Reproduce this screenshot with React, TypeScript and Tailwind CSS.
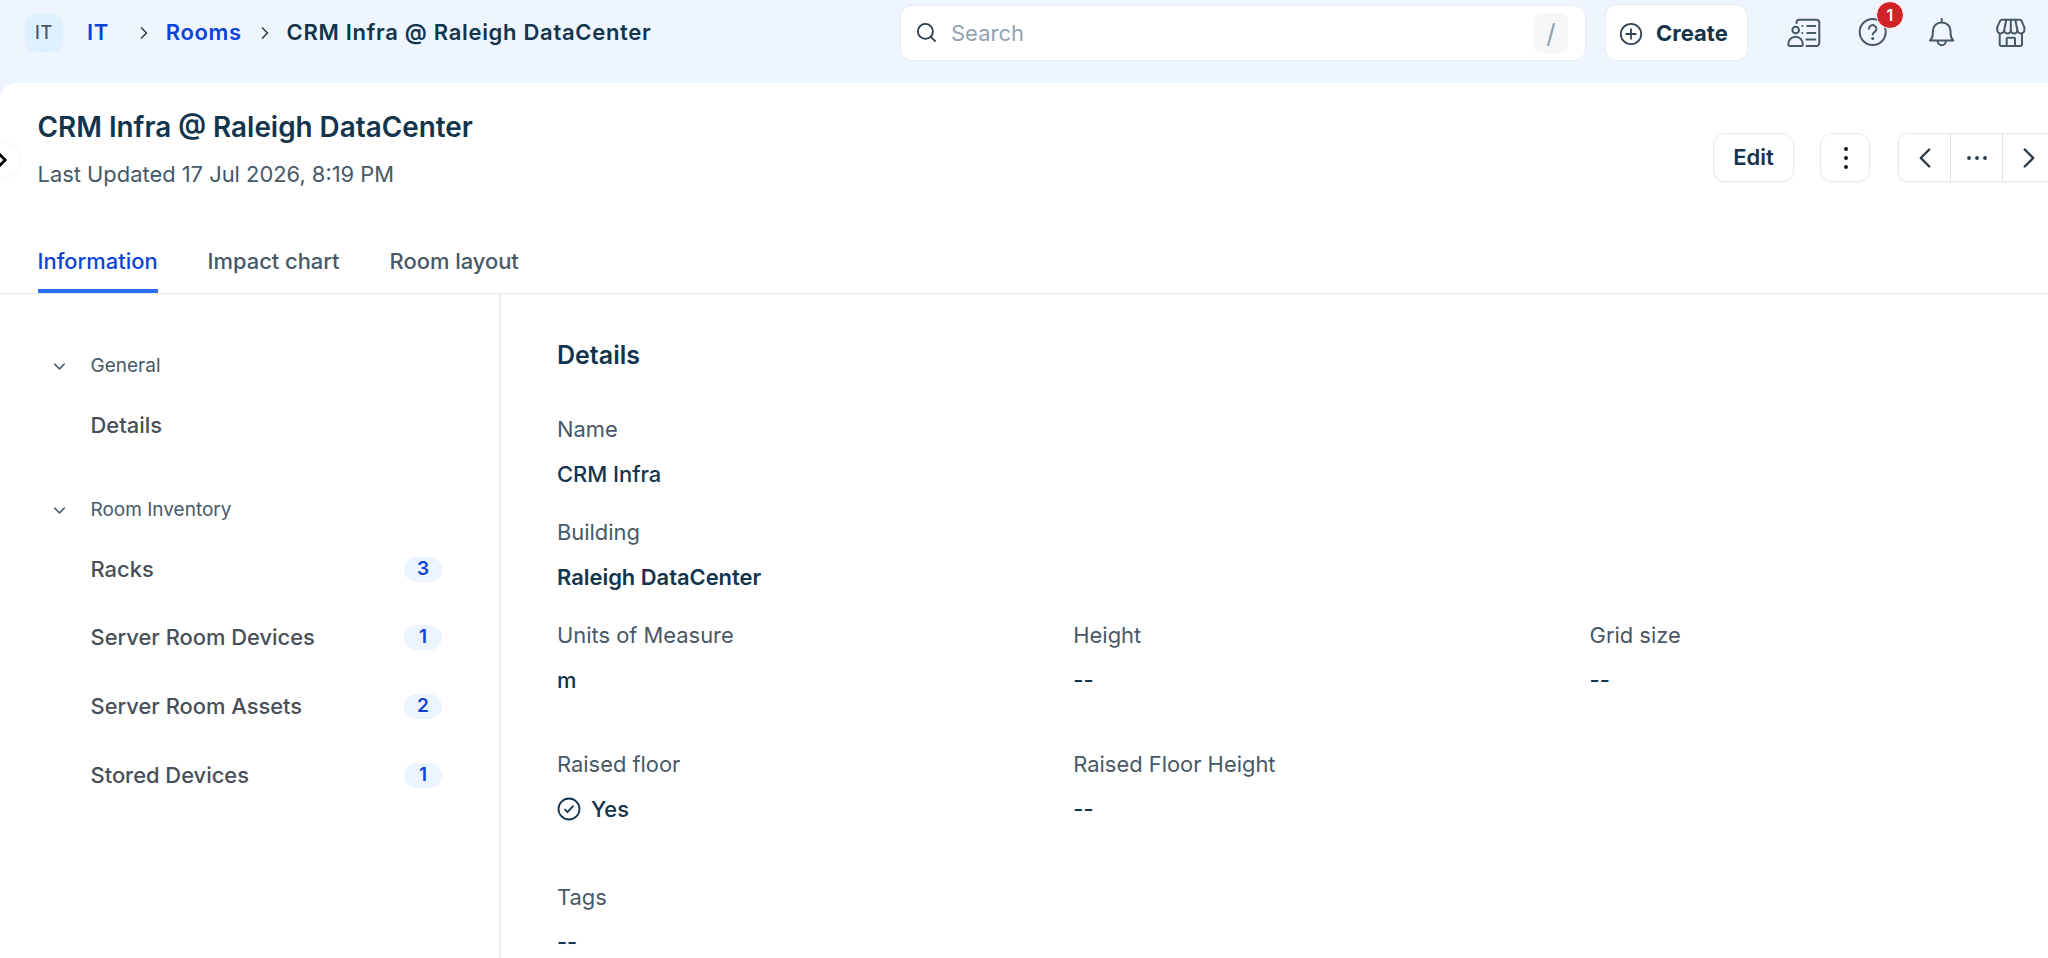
import type { ReactNode } from "react";
import { ChevronDown, ChevronLeft, ChevronRight } from "lucide-react";

const inventory = [
  { label: "Racks", count: 3 },
  { label: "Server Room Devices", count: 1 },
  { label: "Server Room Assets", count: 2 },
  { label: "Stored Devices", count: 1 },
];

function SearchIcon() {
  return (
    <svg width="20" height="20" viewBox="0 0 20 20" fill="none" stroke="#2b3a47" strokeWidth="1.8">
      <circle cx="8.4" cy="8.4" r="7.5" />
      <path d="M13.8 13.8l4.800 4.800" />
    </svg>
  );
}

function PlusCircleIcon() {
  return (
    <svg width="24" height="24" viewBox="0 0 24 24" fill="none" stroke="#33424f" strokeWidth="1.8" strokeLinecap="round">
      <circle cx="12" cy="12" r="10.2" />
      <path d="M12 7.2v9.6M7.2 12h9.6" />
    </svg>
  );
}

function ContactsIcon() {
  return (
    <svg width="34" height="30" viewBox="0 0 34 30" fill="none" stroke="#475867" strokeWidth="2" strokeLinecap="round">
      <path d="M9.500 5V4.200A2.500 2.500 0 0 1 12 1.700h17.300a3 3 0 0 1 3 3V25a3 3 0 0 1-3 3h-9.800" />
      <circle cx="8.700" cy="12" r="3.300" />
      <path d="M2.600 28h11.900a1.300 1.300 0 0 0 1.300-1.300c0-4.700-3-8-7.200-8s-7.300 3.300-7.300 8A1.300 1.300 0 0 0 2.600 28z" />
      <path d="M20.300 8h8M20.300 15h8M19.500 21.500h8.800M15.300 8h.1M15.300 15h.1" />
    </svg>
  );
}

function HelpIcon() {
  return (
    <svg width="32" height="32" viewBox="0 0 32 32" fill="none" stroke="#475867" strokeWidth="2" strokeLinecap="round">
      <circle cx="15.700" cy="16" r="13" />
      <path d="M12 12.800a3.700 3.700 0 1 1 5.700 3.100c-1.300.8-2 1.400-2 2.700" />
      <circle cx="15.700" cy="22.400" r="1.500" fill="#475867" stroke="none" />
    </svg>
  );
}

function BellIcon() {
  return (
    <svg width="28" height="30" viewBox="0 0 28 30" fill="none" stroke="#475867" strokeWidth="2" strokeLinecap="round" strokeLinejoin="round">
      <path d="M13.700 2v3.500M2 23.500h23.400c-1.800-1.500-2.800-3.800-2.800-7v-2.300c0-5-3.700-8.700-8.900-8.700s-8.900 3.700-8.900 8.700v2.300c0 3.200-1 5.500-2.800 7z" />
      <path d="M9.700 24.200a4 4 0 0 0 8 0" />
    </svg>
  );
}

function StoreIcon() {
  return (
    <svg width="32" height="30" viewBox="0 0 32 30" fill="none" stroke="#475867" strokeWidth="2" strokeLinecap="round" strokeLinejoin="round">
      <path d="M6.800 1.700h18c.8 0 1.300.3 1.700 1.100l2.900 6.500v2.500a3.500 3.500 0 0 1-7 .4 3.300 3.300 0 0 1-6.600 0 3.300 3.300 0 0 1-6.600 0 3.500 3.500 0 0 1-7-.4V9.300l2.900-6.500c.4-.8.9-1.100 1.700-1.100z" />
      <path d="M11.300 1.700L9.200 12.200M15.800 1.700v10.500M20.300 1.700l2.100 10.500M4.700 15.500V26.500a1.500 1.500 0 0 0 1.500 1.500h19.300a1.500 1.500 0 0 0 1.500-1.500V15.500" />
      <path d="M11.700 28v-7.300a1 1 0 0 1 1-1h6.300a1 1 0 0 1 1 1V28" />
    </svg>
  );
}

function CheckIcon() {
  return (
    <svg width="24" height="24" viewBox="0 0 24 24" fill="none" stroke="#12344d" strokeWidth="1.800" strokeLinecap="round" strokeLinejoin="round">
      <circle cx="12" cy="12" r="10.500" />
      <path d="M8 12.500l2.500 2.700L16 9.200" />
    </svg>
  );
}

function TopBar() {
  return (
    <header className="flex h-[83px] shrink-0 items-start bg-[#eef5ff]">
      <nav className="flex h-[65px] w-[900px] items-center pl-[25px] text-[22px] font-semibold tracking-[0.6px]">
        <span className="flex h-[38px] w-[38px] items-center justify-center rounded-[10px] bg-[#dff1ff] text-[18px] font-medium text-[#475867]">
          IT
        </span>
        <a className="ml-[24px] text-[#0b43d6]">IT</a>
        <ChevronRight className="ml-[25px] size-[20px] text-[#33424f]" strokeWidth={2} />
        <a className="ml-[12px] text-[#0b43d6]">Rooms</a>
        <ChevronRight className="ml-[13px] size-[20px] text-[#33424f]" strokeWidth={2} />
        <span className="ml-[12px] tracking-[0.7px] text-[#12344d]">CRM Infra @ Raleigh DataCenter</span>
      </nav>
      <div className="mt-[5px] flex h-[56px] w-[686px] items-center rounded-[12px] border border-[#e6ebf2] bg-white pr-[17px] pl-[16px]">
        <SearchIcon />
        <span className="ml-[14px] flex-1 text-[22px] text-[#92a2b1]">Search</span>
        <span className="flex h-[40px] w-[34px] items-center justify-center rounded-[8px] bg-[#f5f7f9] text-[26px] text-[#92a2b1]">/</span>
      </div>
      <button className="mt-[4px] ml-[19px] flex h-[57px] w-[143px] items-center rounded-[12px] border border-[#e6ebf2] bg-white pt-[2px] pl-[13px] text-[22px] font-bold text-[#12344d]">
        <PlusCircleIcon />
        <span className="ml-[13px]">Create</span>
      </button>
      <div className="mt-[16px] ml-[39px] flex items-start">
        <div className="mt-[2px]">
          <ContactsIcon />
        </div>
        <div className="relative ml-[36px]">
          <HelpIcon />
          <span className="absolute -top-[15px] left-[19px] flex size-[28px] items-center justify-center rounded-full border border-white bg-[#d02327] text-[16px] font-semibold text-white">
            1
          </span>
        </div>
        <div className="mt-px ml-[39px]">
          <BellIcon />
        </div>
        <div className="mt-[2px] ml-[39px]">
          <StoreIcon />
        </div>
      </div>
    </header>
  );
}

function PageHeader() {
  return (
    <div className="flex h-[151px] justify-between pl-[37.500px]">
      <div className="pt-[24px]">
        <h1 className="text-[27.850px] leading-[40px] font-semibold text-[#12344d]">CRM Infra @ Raleigh DataCenter</h1>
        <p className="mt-[12px] text-[21.900px] leading-[30px] text-[#475867]">Last Updated 17 Jul 2026, 8:19 PM</p>
      </div>
      <div className="flex pt-[50px] text-[#12344d]">
        <button className="h-[49px] w-[81px] rounded-[12px] border border-[#e6ebf2] text-[22px] font-semibold shadow-xs">Edit</button>
        <button className="ml-[26px] flex h-[49px] w-[50px] items-center justify-center rounded-[12px] border border-[#e6ebf2] pl-[2px] shadow-xs">
          <svg width="4" height="22" viewBox="0 0 4 22" fill="#17191c">
            <circle cx="2" cy="2" r="2" />
            <circle cx="2" cy="11" r="2" />
            <circle cx="2" cy="20" r="2" />
          </svg>
        </button>
        <div className="ml-[28px] flex h-[49px] w-[150px] rounded-l-[9px] border border-r-0 border-[#e6ebf2] shadow-xs">
          <button className="flex w-[52px] shrink-0 items-center justify-center border-r border-[#dde2ea]">
            <ChevronLeft className="size-[34px] text-[#2b3a47]" strokeWidth={1.7} />
          </button>
          <button className="flex w-[52px] shrink-0 items-center justify-center border-r border-[#dde2ea]">
            <svg width="20" height="4" viewBox="0 0 20 4" fill="#2b3a47">
              <circle cx="2" cy="2" r="1.9" />
              <circle cx="10" cy="2" r="1.9" />
              <circle cx="18" cy="2" r="1.9" />
            </svg>
          </button>
          <button className="flex w-[52px] shrink-0 items-center justify-center">
            <ChevronRight className="size-[34px] text-[#2b3a47]" strokeWidth={1.7} />
          </button>
        </div>
      </div>
    </div>
  );
}

function Tabs() {
  return (
    <div className="flex h-[60px] gap-[50px] border-b border-[#e6ebf2] pl-[37.500px] text-[21.900px] leading-[30px] font-medium text-[#475867]">
      <a className="h-[59px] border-b-4 border-[#2c6ff5] pt-[12px] text-[#0b43d6]">Information</a>
      <a className="pt-[12px]">Impact chart</a>
      <a className="pt-[12px]">Room layout</a>
    </div>
  );
}

function SideHeading({ children }: { children: ReactNode }) {
  return (
    <div className="flex h-[30px] items-center pl-[50px] text-[19px] text-[#475867]">
      <ChevronDown className="size-[19px]" strokeWidth={1.8} />
      <span className="mt-px ml-[21.500px]">{children}</span>
    </div>
  );
}

function Sidebar() {
  return (
    <aside className="w-[501px] shrink-0 border-r-2 border-[#ebeff5] pt-[57px] text-[21.900px] font-medium text-[#484f58]">
      <div className="font-normal">
        <SideHeading>General</SideHeading>
      </div>
      <div className="mt-[29px] flex h-[30px] items-center pl-[90.500px]">Details</div>
      <div className="mt-[55px] font-normal">
        <SideHeading>Room Inventory</SideHeading>
      </div>
      <div className="mt-[29px] flex flex-col gap-[38.700px]">
        {inventory.map((item) => (
          <div key={item.label} className="flex h-[30px] items-center justify-between pr-[57px] pl-[90.500px]">
            <span>{item.label}</span>
            <span className="flex h-[25px] w-[38px] items-center justify-center rounded-full bg-[#ebf4ff] text-[19px] font-semibold text-[#0b43d6]">
              {item.count}
            </span>
          </div>
        ))}
      </div>
    </aside>
  );
}

function Field({ label, children }: { label: string; children: ReactNode }) {
  return (
    <div className="w-[516.300px] text-[21.900px] leading-[30px]">
      <div className="text-[#475867]">{label}</div>
      <div className="mt-[15px] flex items-center font-medium text-[#12344d]">{children}</div>
    </div>
  );
}

function Details() {
  return (
    <main className="flex-1 pt-[44px] pl-[56px]">
      <h2 className="text-[25px] leading-[34px] font-semibold text-[#12344d]">Details</h2>
      <div className="mt-[42px] flex flex-col gap-[28px]">
        <Field label="Name">CRM Infra</Field>
        <Field label="Building">
          <span className="font-semibold">Raleigh DataCenter</span>
        </Field>
        <div className="flex">
          <Field label="Units of Measure">m</Field>
          <Field label="Height">--</Field>
          <Field label="Grid size">--</Field>
        </div>
      </div>
      <div className="mt-[54px] flex">
        <Field label="Raised floor">
          <CheckIcon />
          <span className="ml-[10px]">Yes</span>
        </Field>
        <Field label="Raised Floor Height">--</Field>
      </div>
      <div className="mt-[58px]">
        <Field label="Tags">--</Field>
      </div>
    </main>
  );
}

export default function App() {
  return (
    <div className="relative flex h-[958px] w-[2048px] flex-col overflow-hidden bg-[#eef5ff] font-['Inter',sans-serif]">
      <TopBar />
      <div className="flex flex-1 flex-col rounded-tl-[16px] bg-white">
        <PageHeader />
        <Tabs />
        <div className="flex flex-1">
          <Sidebar />
          <Details />
        </div>
      </div>
      {/* collapsed navigation handle */}
      <button className="absolute top-[143px] -left-[15px] flex size-[34px] items-center justify-center rounded-full bg-white shadow-[0_0_6px_rgba(0,0,0,0.06)]">
        <ChevronRight className="size-[26px] text-black" strokeWidth={2.5} />
      </button>
    </div>
  );
}
